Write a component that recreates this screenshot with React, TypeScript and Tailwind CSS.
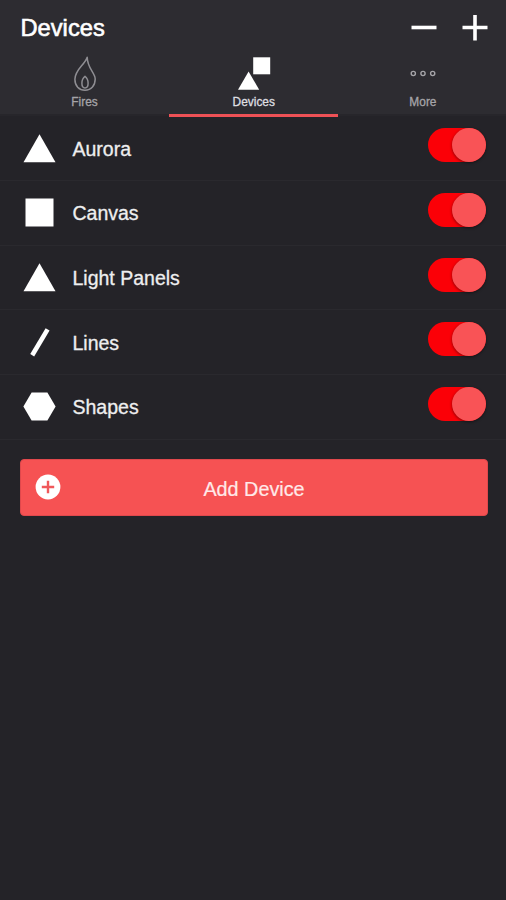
import { useState } from 'react';
import type { ReactNode } from 'react';

const FlameIcon = () => (
    <svg width="24" height="38" viewBox="0 0 24 38" fill="none" stroke="#8f8e93" strokeWidth="1.5" strokeLinejoin="round">
        <path d="M14.2 2.2C12 9.5 1.9 14.5 1.9 24.3C1.9 31 5.9 35.2 12 35.2C18.3 35.2 22.2 30.5 22.2 24C22.2 17.8 14.4 13.5 14.2 2.2Z" />
        <path d="M12 21.3C10.2 22.6 8.9 25.5 8.9 28.3C8.9 31.1 10 33 12 33C14 33 15.1 31.1 15.1 28.3C15.1 25.5 13.8 22.6 12 21.3Z" />
    </svg>
);

const DevicesIcon = () => (
    <svg width="34" height="38" viewBox="0 0 34 38" fill="#fff">
        <rect x="16.2" y="2.3" width="17" height="17" />
        <path d="M11.6 16.5L22.2 34.8H1Z" />
    </svg>
);

const MoreIcon = () => (
    <svg width="28" height="38" viewBox="0 0 28 38" fill="none" stroke="#a5a4a8" strokeWidth="1.4">
        <circle cx="4.3" cy="18.5" r="2.1" />
        <circle cx="14" cy="18.5" r="2.1" />
        <circle cx="23.7" cy="18.5" r="2.1" />
    </svg>
);

const shapes: Record<string, ReactNode> = {
    triangle: <path d="M16.5 2.3L32.5 30.3H0.5Z" />,
    square: <rect x="2.5" y="2.5" width="28" height="28" />,
    line: <path d="M24.6 3.4L9.2 29.2" stroke="#fff" strokeWidth="4.6" />,
    hexagon: <path d="M8.6 2.5H24.4L32.6 16.5L24.4 30.5H8.6L0.4 16.5Z" />,
};

const tabs = [
    { label: 'Fires', icon: <FlameIcon /> },
    { label: 'Devices', icon: <DevicesIcon /> },
    { label: 'More', icon: <MoreIcon /> },
];

const devices = [
    { name: 'Aurora', shape: 'triangle' },
    { name: 'Canvas', shape: 'square' },
    { name: 'Light Panels', shape: 'triangle' },
    { name: 'Lines', shape: 'line' },
    { name: 'Shapes', shape: 'hexagon' },
];

const Toggle = ({ label }: { label: string }) => {
    const [on, setOn] = useState(true);

    return (
        <button
            role="switch"
            aria-checked={on}
            aria-label={label}
            onClick={() => setOn(!on)}
            className={`mb-[6px] flex h-[34px] w-[58px] rounded-full ${on ? 'justify-end bg-[#fb0007]' : 'justify-start bg-[#4a494e]'}`}
        >
            <span className="size-[34px] rounded-full bg-[#f95356] shadow-[0_1px_3px_rgba(0,0,0,0.45)]" />
        </button>
    );
};

const App = () => {
    const [activeTab, setActiveTab] = useState('Devices');

    return (
        <div className="min-h-screen overflow-hidden bg-[#242328] font-['Liberation_Sans',Arial,sans-serif] text-white">
            <header className="h-[116.4px] border-b-2 border-[#27262b] bg-[#2d2c31]">
                <div className="flex h-[55px] items-center justify-between pr-[18px] pl-[20.5px]">
                    <h1 className="pt-[2px] text-[23.7px] leading-none [-webkit-text-stroke:0.6px_#fff]">Devices</h1>
                    <div className="flex gap-[25px]">
                        <button aria-label="Remove device">
                            <svg width="26" height="26" viewBox="0 0 26 26" stroke="#fff" strokeWidth="3.6">
                                <path d="M0.5 12.5H25.5" />
                            </svg>
                        </button>
                        <button aria-label="Add device">
                            <svg width="26" height="26" viewBox="0 0 26 26" stroke="#fff" strokeWidth="3.6">
                                <path d="M0.5 12.5H25.5M13 0V25.4" />
                            </svg>
                        </button>
                    </div>
                </div>

                <nav className="grid h-[62px] w-[507.5px] grid-cols-3">
                    {tabs.map((tab) => (
                        <button
                            key={tab.label}
                            onClick={() => setActiveTab(tab.label)}
                            className={`flex flex-col items-center border-b-3 ${
                                tab.label === activeTab ? 'border-[#ee5156] text-[#dedee0]' : 'border-transparent text-[#a5a4a8]'
                            }`}
                        >
                            {tab.icon}
                            <span className="mt-[3px] text-[11.9px] leading-[13px] [-webkit-text-stroke:0.3px]">{tab.label}</span>
                        </button>
                    ))}
                </nav>
            </header>

            <ul>
                {devices.map((device) => (
                    <li
                        key={device.name}
                        className="flex h-[64.7px] items-center border-b border-[#2a292e] pr-5 pl-[23px]"
                    >
                        <svg width="33" height="33" viewBox="0 0 33 33" fill="#fff">
                            {shapes[device.shape]}
                        </svg>
                        <span className="ml-[16.5px] flex-1 pt-[2px] text-[19.5px] text-[#eeeeef] [-webkit-text-stroke:0.3px]">{device.name}</span>
                        <Toggle label={device.name} />
                    </li>
                ))}
            </ul>

            <div className="pt-[19px] pr-[18px] pl-5">
                <button className="grid h-[57px] w-full grid-cols-[40px_1fr_40px] items-center rounded-[4px] border border-[#e0484c] bg-[#f65253] pl-[14px] pr-[14px]">
                    <svg width="26" height="26" viewBox="0 0 26 26">
                        <circle cx="13" cy="13" r="12.4" fill="#fff" />
                        <path d="M6.8 13H19.2M13 6.8V19.2" stroke="#f0585a" strokeWidth="2.4" />
                    </svg>
                    <span className="pt-[5px] text-[19.8px] text-[#ffe9e9] [-webkit-text-stroke:0.2px]">Add Device</span>
                </button>
            </div>
        </div>
    );
};

export default App;
